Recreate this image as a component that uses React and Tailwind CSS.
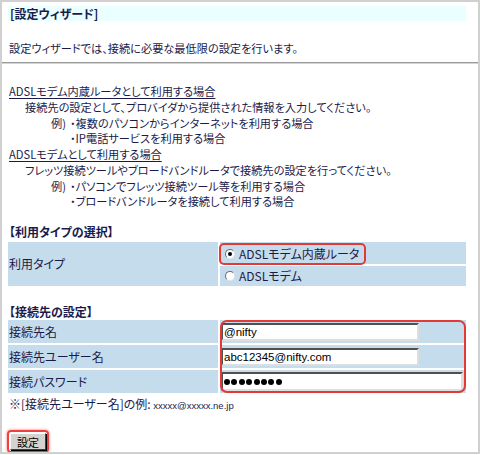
import React from 'react';

const NAVY = 'text-[#1b1b4b]';

function Radio({ checked }) {
  return (
    <span className="flex h-[10px] w-[10px] shrink-0 items-center justify-center rounded-full border border-t-[#6b6b6b] border-l-[#6b6b6b] border-r-[#e4e4e4] border-b-[#e4e4e4] bg-white">
      {checked ? <span className="h-[4px] w-[4px] rounded-full bg-black" /> : null}
    </span>
  );
}

function FieldInput({ value }) {
  return (
    <input
      readOnly
      value={value}
      className="h-[18px] w-[198px] border-2 border-t-[#505050] border-l-[#505050] border-r-[#dedede] border-b-[#dedede] bg-white px-[1px] text-[11.5px] leading-[14px] text-black outline-none"
      style={{ fontFamily: '"Liberation Sans", Arial, sans-serif' }}
    />
  );
}

function Example({ label, children }) {
  return (
    <div className="flex pl-[43px]">
      <span className="w-[19px]">{label}</span>
      <span>{children}</span>
    </div>
  );
}

const connectionRows = [
  { label: '接続先名', value: '@nifty' },
  { label: '接続先ユーザー名', value: 'abc12345@nifty.com' },
  { label: '接続パスワード', password: true },
];

export default function App() {
  return (
    <div
      className={`box-border h-[454px] w-[480px] overflow-hidden border-2 border-[#d0d0d0] bg-white text-[12px] [font-feature-settings:'palt'] ${NAVY}`}
      style={{ fontFamily: '"Noto Sans CJK JP", "Liberation Sans", sans-serif' }}
    >
      <div className="pl-[6px] pr-[12px] pt-[4px]">
        <div className="h-[15px] bg-[#eaffff] pl-[2px] font-bold leading-[15px]">[設定ウィザード]</div>
        <p className="mt-[19px] pl-[1px] text-[11.2px] leading-[16px]">設定ウィザードでは、接続に必要な最低限の設定を行います。</p>
      </div>

      <div className="mt-[6px] h-[2px] border-t border-b border-t-[#9a9a9a] border-b-[#d4d4d4]" />

      <div className="pl-[6px] pr-[12px]">
        <div className="mt-[20px] text-[11.2px] leading-[15.75px]">
          <p className="pl-[1px] underline underline-offset-[2px]">ADSLモデム内蔵ルータとして利用する場合</p>
          <p className="pl-[17px]">接続先の設定として、プロバイダから提供された情報を入力してください。</p>
          <Example label="例)">・複数のパソコンからインターネットを利用する場合</Example>
          <Example label="">・IP電話サービスを利用する場合</Example>
          <p className="pl-[1px] underline underline-offset-[2px]">ADSLモデムとして利用する場合</p>
          <p className="pl-[17px]">フレッツ接続ツールやブロードバンドルータで接続先の設定を行ってください。</p>
          <Example label="例)">・パソコンでフレッツ接続ツール等を利用する場合</Example>
          <Example label="">・ブロードバンドルータを接続して利用する場合</Example>
        </div>

        <h3 className="mt-[14px] pl-[1px] font-bold leading-[16px]">【利用タイプの選択】</h3>
        <div className="mt-[2px] grid grid-cols-[210px_246px] gap-[2px]">
          <div className="row-span-2 flex items-center bg-[#c5dcec] pl-[1px]">利用タイプ</div>
          <div className="h-[22px] bg-[#c5dcec]">
            <span className="-ml-[1px] inline-flex h-full items-center gap-[4px] rounded-[5px] border-2 border-[#e53935] pl-[4px] pr-[5px]">
              <Radio checked />
              ADSLモデム内蔵ルータ
            </span>
          </div>
          <div className="flex h-[20px] items-center gap-[4px] bg-[#c5dcec] pl-[5px]">
            <Radio />
            ADSLモデム
          </div>
        </div>

        <h3 className="mt-[18px] pl-[1px] font-bold leading-[16px]">【接続先の設定】</h3>
        <div className="grid grid-cols-[210px_246px] gap-x-[2px]">
          <div className="flex flex-col gap-[2px]">
            {connectionRows.map((row) => (
              <div key={row.label} className="flex h-[23px] items-center bg-[#c5dcec] pl-[1px]">
                {row.label}
              </div>
            ))}
          </div>
          <div className="relative flex flex-col gap-[2px]">
            {connectionRows.map((row) => (
              <div key={row.label} className="flex h-[23px] items-center bg-[#c5dcec] pl-[1px]">
                {row.password ? (
                  <div className="flex h-[19px] w-[242px] items-center gap-[1.4px] border-2 border-t-[#505050] border-l-[#505050] border-r-[#dedede] border-b-[#dedede] bg-white pl-[1px]">
                    {Array.from({ length: 8 }).map((_, i) => (
                      <span key={i} className="h-[6px] w-[6px] rounded-full bg-black" />
                    ))}
                  </div>
                ) : (
                  <FieldInput value={row.value} />
                )}
              </div>
            ))}
            <div className="pointer-events-none absolute inset-0 rounded-[7px] border-2 border-[#e53935]" />
          </div>
        </div>

        <p className="mt-[3px] pl-[1px] leading-[16px]">
          ※[接続先ユーザー名]の例:
          <span className="text-[9.5px]" style={{ fontFamily: '"Liberation Sans", Arial, sans-serif' }}>
            {' '}xxxxx@xxxxx.ne.jp
          </span>
        </p>

        <div className="-ml-[1px] mt-[16px] inline-flex rounded-[4px] border-2 border-[#ef4040] p-[1px] shadow-[0_0_3px_#ff7070]">
          <button className="h-[17px] w-[36px] border border-t-white border-l-white border-r-[#404040] border-b-[#404040] bg-[#d6d3ce] text-[11px] leading-[14px] text-black shadow-[1px_1px_0_#000]">
            設定
          </button>
        </div>
      </div>
    </div>
  );
}
